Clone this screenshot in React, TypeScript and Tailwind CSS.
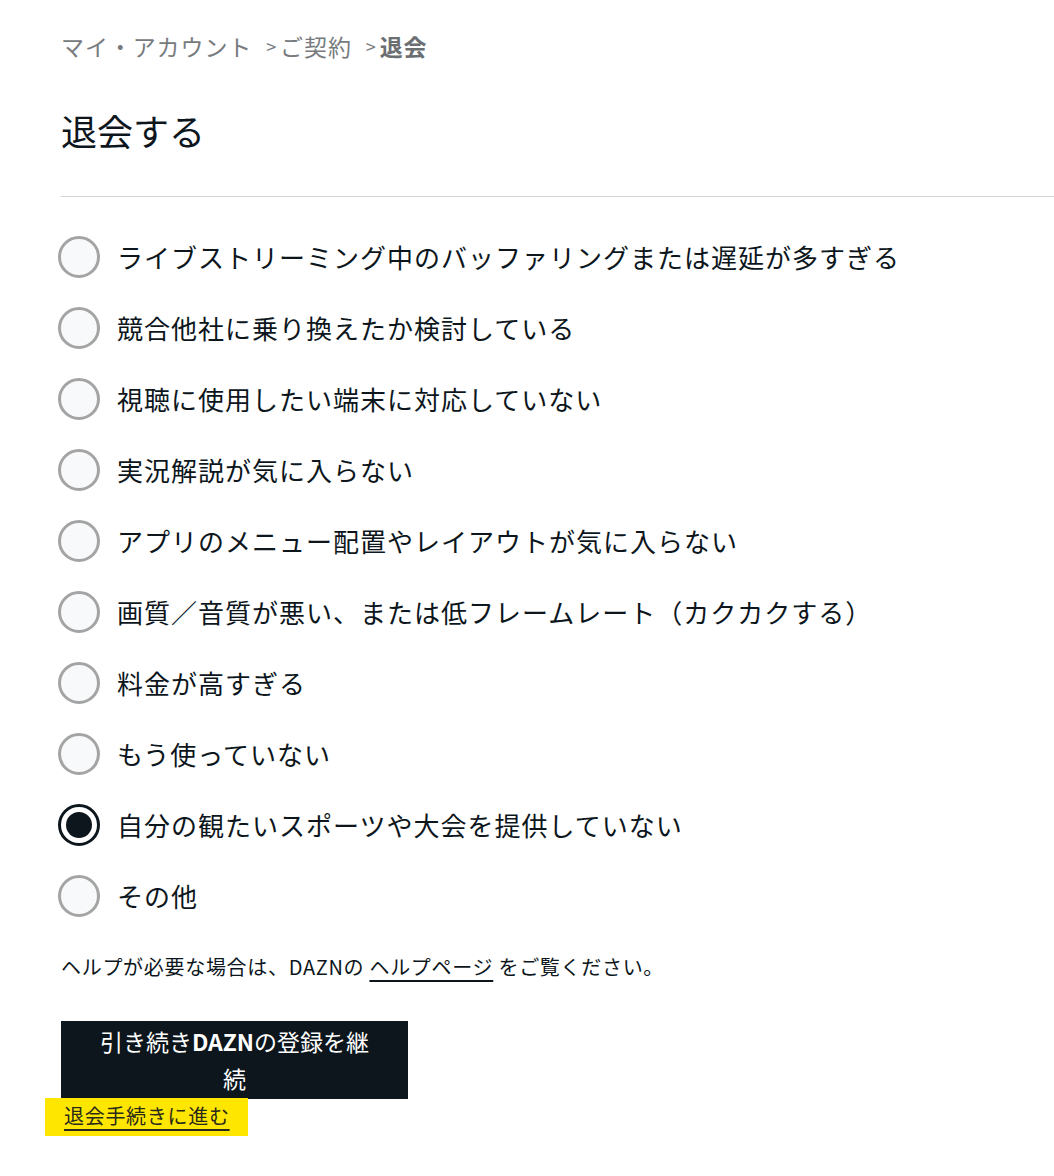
import { useState } from "react";

const reasons = [
  "ライブストリーミング中のバッファリングまたは遅延が多すぎる",
  "競合他社に乗り換えたか検討している",
  "視聴に使用したい端末に対応していない",
  "実況解説が気に入らない",
  "アプリのメニュー配置やレイアウトが気に入らない",
  "画質／音質が悪い、または低フレームレート（カクカクする）",
  "料金が高すぎる",
  "もう使っていない",
  "自分の観たいスポーツや大会を提供していない",
  "その他",
];

const font = { fontFamily: '"Noto Sans CJK JP", "Noto Sans", sans-serif' };

const App = () => {
  const [selected, setSelected] = useState(8);

  return (
    <div className="min-h-screen bg-white pl-[61px] text-[#0c161c]" style={font}>
      <nav className="pt-[30px] flex items-center text-[23px] leading-[32px] tracking-[0.9px] text-[#777b7e]">
        <span>マイ・アカウント</span>
        <span className="ml-[14px] mr-[3px] text-[18px]">&gt;</span>
        <span>ご契約</span>
        <span className="ml-[14px] mr-[3px] text-[18px]">&gt;</span>
        <span className="font-bold text-[#6b6f72]">退会</span>
      </nav>

      <h1 className="mt-[44px] text-[36px] leading-[48px] font-normal">退会する</h1>

      <hr className="mt-[42px] border-t border-[#d6d6d6]" />

      <form className="mt-[24px]">
        <ul className="flex flex-col">
          {reasons.map((r, i) => (
            <li key={r}>
              <label
                className="flex items-center h-[71px] gap-[17px] cursor-pointer"
                onClick={() => setSelected(i)}
              >
                {selected === i ? (
                  <span className="-ml-[3px] w-[42px] h-[42px] rounded-full border-[3px] border-[#0c161c] bg-white flex items-center justify-center">
                    <span className="w-[26px] h-[26px] rounded-full bg-[#0c161c]" />
                  </span>
                ) : (
                  <span className="-ml-[3px] w-[42px] h-[42px] rounded-full border-[3px] border-[#a4a4a4] bg-[#f8f9fa]" />
                )}
                <span className="text-[26px] tracking-[1px] leading-[36px]">{r}</span>
              </label>
            </li>
          ))}
        </ul>

        <p className="mt-[21px] text-[20px] tracking-[0.7px] leading-[30px]">
          ヘルプが必要な場合は、DAZNの{" "}
          <a href="#" className="underline underline-offset-[5px]">
            ヘルプページ
          </a>{" "}
          をご覧ください。
        </p>

        <div className="mt-[39px] w-[347px] bg-[#0c161c] px-[34px] py-[2px]">
          <button type="button" className="w-full text-white text-[23px] leading-[37px] text-center">
            引き続き<b>DAZN</b>の登録を継続
          </button>
        </div>
        <a
          href="#"
          className="-ml-[16px] -mt-px inline-block bg-[#ffe600] pl-[19px] pr-[18px] h-[38px] leading-[36px] text-[20px] tracking-[0.7px] underline underline-offset-[5px] text-[#2a2a1a]"
        >
          退会手続きに進む
        </a>
      </form>
    </div>
  );
};

export default App;
